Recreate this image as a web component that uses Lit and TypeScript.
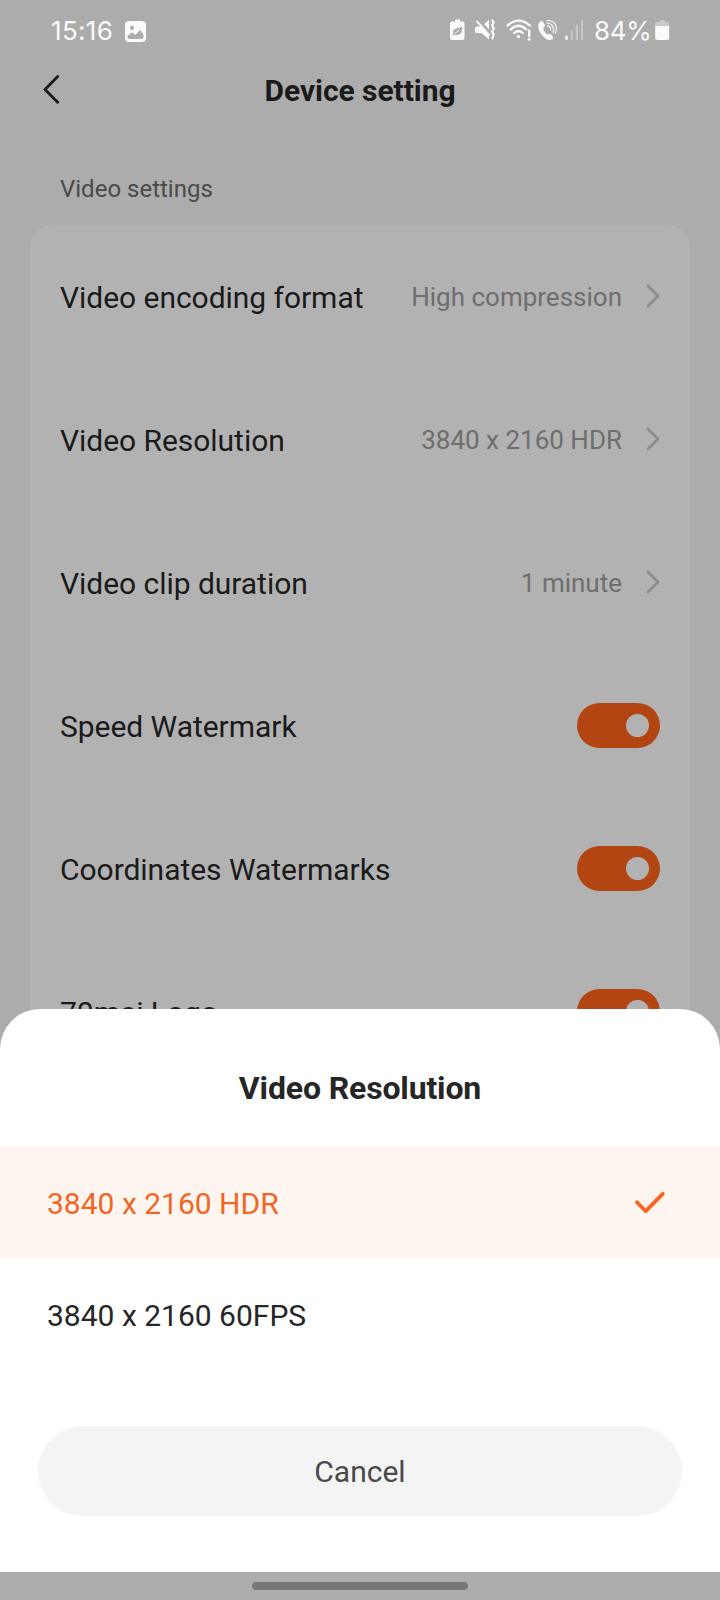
import { LitElement, html, css } from "lit";
import { customElement, property } from "lit/decorators.js";

@customElement("status-bar")
class StatusBar extends LitElement {
  static styles = css`
    :host { display: flex; align-items: flex-start; height: 60px; box-sizing: border-box; padding: 19px 50px 0 51px; color: #fafafa; font: 400 26px/23px Inter, sans-serif; }
    svg { display: block; flex: none; }
    .time { width: 74px; letter-spacing: .3px; }
    .space { flex: 1; }
    .icons { display: flex; }
    .leaf { margin-right: 10px; }
    .mute { margin-right: 10px; }
    .wifi { margin-right: 6px; }
    .call { margin-right: 7px; }
    .signal { margin-right: 10px; }
    .percent { width: 61px; letter-spacing: -0.3px; }
  `;
  render() {
    return html`
      <span class="time">15:16</span>
      <svg width="21" height="23" viewBox="0 0 21 23">
        <path fill="#fafafa" fill-rule="evenodd" d="M4 2h13a4 4 0 0 1 4 4v13a4 4 0 0 1-4 4H4a4 4 0 0 1-4-4V6a4 4 0 0 1 4-4ZM2.500 17v1.300q0 1.700 1.700 1.700h12.600q1.700 0 1.700-1.700V15.500L15 11l-4.800 5-3.200-2.700ZM7 6.700a2.100 2.100 0 1 0 .01 0Z"/>
      </svg>
      <span class="space"></span>
      <div class="icons">
        <svg class="leaf" width="15" height="22" viewBox="0 0 15 22">
          <path fill="#fafafa" d="M5 .5h5v2h2.500q2 0 2 2v14.500q0 2-2 2h-10.500q-2 0-2-2v-14.500q0-2 2-2H5z"/>
          <path fill="#acacac" d="M12.300 7.500q.6 8.500-5.800 8.500-1.300 0-2.100-.5l-1.700 1-.5-.8 1.300-1.200C1.500 9.500 7.500 9.500 12.300 7.500Z"/>
          <path d="M4.500 14.500Q7 13.500 9.500 10.500" stroke="#fafafa" stroke-width=".9" fill="none"/>
        </svg>
        <svg class="mute" width="21" height="22" viewBox="0 0 21 22">
          <path fill="#fafafa" d="M1.500 7.500h5L14 .8v19.700l-7.500-6.500h-5q-1.500 0-1.500-1.500V9q0-1.500 1.500-1.500Z"/>
          <path d="M2.500 .5 15 14.200" stroke="#acacac" stroke-width="3.600"/>
          <path d="M2.200 2.600 14 15.800" stroke="#fafafa" stroke-width="2" stroke-linecap="round"/>
          <path d="M17.300 1.500l1.400 2-1.700 3 1.900 3-1.900 3.200 1.700 2.900-1.400 3.800" stroke="#fafafa" stroke-width="2.200" fill="none" stroke-linecap="round" stroke-linejoin="round"/>
        </svg>
        <svg class="wifi" width="26" height="22" viewBox="0 0 26 22">
          <g fill="none" stroke="#fafafa" stroke-width="2.300" stroke-linecap="round">
            <path d="M1.500 6.600Q12.500-3.400 24 6.600M4.800 10.400Q12.500 3.200 20.200 10.400M8.200 14q4.300-3.900 8.600 0"/>
            <path d="M23.200 11.500v5.500" stroke-width="2.400"/>
          </g>
          <circle cx="12.500" cy="17.600" r="1.700" fill="#fafafa"/>
          <circle cx="23.200" cy="20.300" r="1.500" fill="#fafafa"/>
        </svg>
        <svg class="call" width="20" height="22" viewBox="0 0 20 22">
          <path fill="#fafafa" d="M2.500 2.300q1.500-1.100 2.500.4l1.700 3q.7 1.400-.5 2.400l-1 .9q.3 3.700 4 6.600l1.700-.6q1.300-.4 2.200.6l1.800 2.400q.9 1.500-.6 2.300-3 1.700-6.200-.4Q.2 14 .2 6.800q0-3 2.300-4.500Z"/>
          <g fill="none" stroke="#fafafa" stroke-width="1.200" stroke-linecap="round">
            <path d="M9.400 6.900q3.300.1 3.400 4.200M8.900 4q6.400 0 6.700 7.100-.1 1.200-.6 2M9 1.500q9.300-.2 9.500 8.500-.1 2.500-1.400 4.300"/>
          </g>
        </svg>
        <svg class="signal" width="19" height="22" viewBox="0 0 19 22">
          <rect x=".4" y="16.500" width="2.300" height="4.500" rx="1" fill="#fafafa"/>
          <g fill="#c7c7c7"><rect x="5.600" y="11.200" width="2.200" height="9.800" rx="1"/><rect x="10.800" y="5.800" width="2.200" height="15.200" rx="1"/><rect x="15.900" y="1" width="2.200" height="20" rx="1"/></g>
        </svg>
      </div>
      <span class="percent">84%</span>
      <svg width="15" height="22" viewBox="0 0 15 22">
        <path fill="#c9c9c9" d="M5 1h5v2h2.500q1.800 0 1.800 2v3H0V5q0-2 2-2h3z"/>
        <path fill="#fafafa" d="M.2 7h14v12q0 2-2 2h-10q-2 0-2-2z"/>
      </svg>
    `;
  }
}

@customElement("setting-row")
class SettingRow extends LitElement {
  @property() label = "";
  @property() value = "";
  static styles = css`
    :host { display: flex; align-items: center; height: 143px; padding: 0 30px; }
    .label { flex: 1; color: #1a1a1a; font-size: 30px; line-height: 36px; letter-spacing: -.04px; padding-top: 2px; }
    .value { color: #6e6e6e; font-size: 26px; line-height: 32px; margin-right: 24px; }
    .chevron { margin-top: -2px; }
    .switch { width: 83px; height: 45px; border-radius: 23px; background: #b34513; display: flex; align-items: center; justify-content: flex-end; padding-right: 11px; box-sizing: border-box; }
    .knob { width: 23px; height: 23px; border-radius: 50%; background: #b2b2b2; }
  `;
  render() {
    return html`
      <span class="label">${this.label}</span>
      ${this.value
        ? html`<span class="value">${this.value}</span>
            <svg class="chevron" width="14" height="24" viewBox="0 0 14 24"><path d="M2 2 12 12 2 22" fill="none" stroke="#8b8b8b" stroke-width="2.600" stroke-linecap="round" stroke-linejoin="round"/></svg>`
        : html`<div class="switch"><div class="knob"></div></div>`}
    `;
  }
}

@customElement("app-root")
class AppRoot extends LitElement {
  static styles = css`
    :host { display: block; position: relative; width: 720px; height: 1600px; overflow: hidden; background: #acacac; font-family: Roboto, sans-serif; }
    .head { display: grid; grid-template-columns: 60px 1fr 60px; align-items: center; height: 60px; }
    .back { display: block; margin-left: 42px; }
    h1, h2 { margin: 0; font-weight: 700; text-align: center; }
    h1 { color: #1a1a1a; font-size: 30px; line-height: 36px; letter-spacing: -.05px; padding-top: 2px; }
    .section { padding: 53px 60px 0; height: 52px; color: #4a4a4a; font-size: 24px; line-height: 32px; }
    .card { margin: 0 30px; height: 860px; border-radius: 22px 22px 0 0; background: #b2b2b2; overflow: hidden; }
    .sheet { position: absolute; left: 0; right: 0; bottom: 28px; height: 563px; border-radius: 40px 40px 0 0; background: #fff; display: flex; flex-direction: column; }
    h2 { color: #262626; font-size: 32px; line-height: 40px; letter-spacing: -.15px; padding: 59px 0 38px; }
    .option { display: flex; align-items: center; justify-content: space-between; height: 112px; padding: 0 55px 0 47px; box-sizing: border-box; color: #262626; font-size: 30px; line-height: 36px; }
    .option span { padding-top: 3px; }
    .selected { background: #fff5f0; color: #f26522; }
    .check { margin-top: 2px; }
    .cancel { margin: 56px 38px 0; height: 90px; border: 0; border-radius: 45px; background: #f4f4f4; color: #4a4a4a; font: 400 30px/36px Roboto, sans-serif; padding: 1px 0 0; }
    .nav { position: absolute; left: 0; right: 0; bottom: 0; height: 28px; display: flex; align-items: center; justify-content: center; }
    .handle { width: 216px; height: 8px; border-radius: 4px; background: #777; }
  `;
  render() {
    return html`
      <status-bar></status-bar>
      <div class="head">
        <svg class="back" width="18" height="30" viewBox="0 0 18 30"><path d="M15.700 1.500 3 14.400l12.700 12.900" fill="none" stroke="#1a1a1a" stroke-width="2.800" stroke-linecap="round" stroke-linejoin="round"/></svg>
        <h1>Device setting</h1>
      </div>
      <div class="section">Video settings</div>
      <div class="card">
        <setting-row label="Video encoding format" value="High compression"></setting-row>
        <setting-row label="Video Resolution" value="3840 x 2160 HDR"></setting-row>
        <setting-row label="Video clip duration" value="1 minute"></setting-row>
        <setting-row label="Speed Watermark"></setting-row>
        <setting-row label="Coordinates Watermarks"></setting-row>
        <setting-row label="70mai Logo"></setting-row>
      </div>
      <div class="sheet">
        <h2>Video Resolution</h2>
        <div class="option selected">
          <span>3840 x 2160 HDR</span>
          <svg class="check" width="31" height="24" viewBox="0 0 31 24"><path d="M3 11.200 11.700 20.200 28.700 2.800" fill="none" stroke="#fa6420" stroke-width="3.800" stroke-linecap="round" stroke-linejoin="round"/></svg>
        </div>
        <div class="option"><span>3840 x 2160 60FPS</span></div>
        <button class="cancel">Cancel</button>
      </div>
      <div class="nav"><div class="handle"></div></div>
    `;
  }
}
